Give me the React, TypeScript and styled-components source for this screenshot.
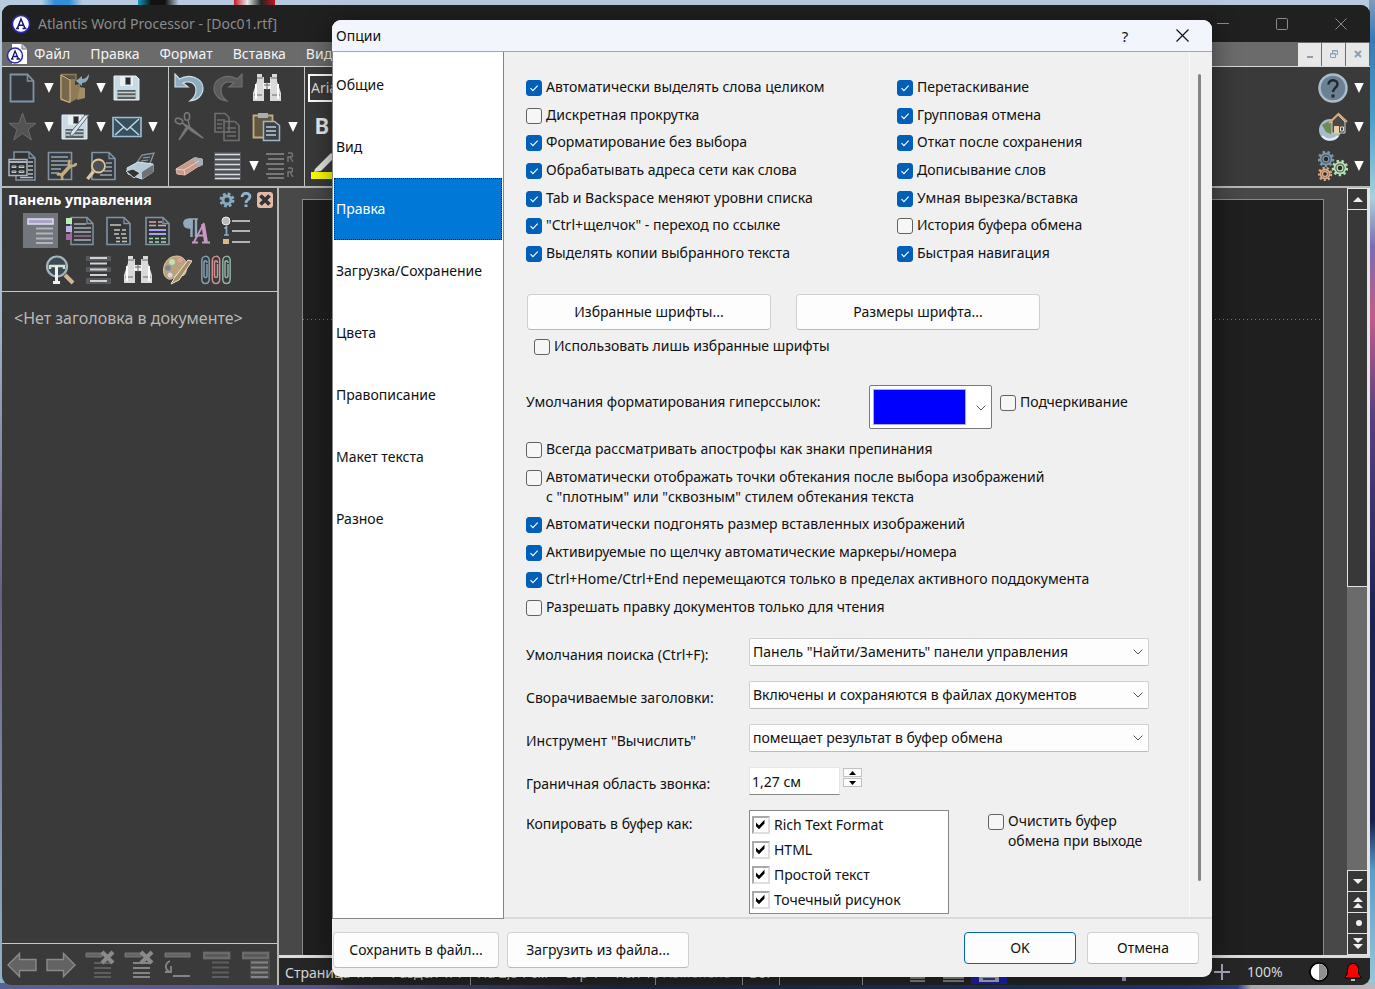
import React, { useState } from "react";
import styled, { createGlobalStyle, css } from "styled-components";

const uiFont = `"Noto Sans", "Open Sans", "Liberation Sans", sans-serif`;

const GlobalStyle = createGlobalStyle`
  *, *::before, *::after { box-sizing: border-box; }
  body { margin: 0; font: 14px/20px ${uiFont}; color: #111; }
  button, input, select { font: inherit; color: inherit; margin: 0; padding: 0; }
  button { cursor: default; background: none; border: 0; }
  h1, h2, ul { margin: 0; padding: 0; font-size: inherit; font-weight: inherit; list-style: none; }
  svg { display: block; flex: none; }
`;

/* ---------- desktop and main window ---------- */

const Desktop = styled.div`
  position: relative;
  height: 100vh;
  min-height: 980px;
  padding: 5px 5px 4px 2px;
  display: flex;
  background:
    linear-gradient(90deg, transparent 3%, #2f8fd8 4%, #2f8fd8 5%, transparent 6%, transparent 10%, #18a0c8 10%, #111 11%, #111 12%, transparent 13%, transparent 17%, #c01820 17%, #e8e8e8 18%, #222 19%, #c01820 20%, transparent 20%) 0 0 / 100% 5px no-repeat,
    linear-gradient(90deg, #56628f, #5a5486 25%, #1c2846 45%, #20386a 80%, #27407a 90%, #a9a7ad 91%, #b9b8bb) 0 100% / 100% 6px no-repeat,
    linear-gradient(#7f9cbd, #3b78b5 4%, #4aa0c8 12%, #a9d0dd 20%, #7d6cae 25%, #c05c8d 32%, #59407e 42%, #1b2450 62%, #16224c 83%, #5c9cc4 88%, #9ec7dc) 100% 0 / 6px 100% no-repeat,
    linear-gradient(#b7cbe0, #a6bcd2 30%, #6a5f86 60%, #8fb4cc);
`;

const MainWindow = styled.div`
  flex: 1;
  min-width: 0;
  display: flex;
  flex-direction: column;
  overflow: hidden;
  border-radius: 9px;
  background: #3a3a3a;
  color: #fff;
`;

const TitleBar = styled.header`
  height: 37px;
  flex: none;
  display: flex;
  align-items: center;
  padding-left: 9px;
  background: #202020;
  color: #8b8b8b;
  h1 { flex: 1; padding-left: 7px; font-size: 14px; }
`;

const CaptionButton = styled.button`
  width: 59px;
  height: 37px;
  display: grid;
  place-items: center;
`;

const MenuBar = styled.nav`
  height: 25px;
  flex: none;
  display: flex;
  align-items: center;
  padding-left: 4px;
  background: #6b6b6b;
  border-bottom: 1px solid #d8dcda;
`;

const MenuItem = styled.button`
  padding: 0 10px;
  color: #f4f4f4;
  &:first-of-type { padding-left: 6px; }
`;

const MdiButtons = styled.div`
  margin-left: auto;
  display: flex;
  gap: 1px;
  padding-right: 1px;
`;

const MdiButton = styled.button`
  width: 23px;
  height: 23px;
  display: grid;
  place-items: center;
  background: #e8e8e8;
`;

const Toolbar = styled.div`
  height: 121px;
  flex: none;
  display: flex;
  border-bottom: 2px solid #b4b9b6;
`;

const ToolGroup = styled.div<{ $left?: number; $right?: number; $end?: boolean }>`
  padding: 1px ${(p) => p.$right ?? 0}px 0 ${(p) => p.$left ?? 5}px;
  ${(p) => (p.$end ? "margin-left: auto;" : "border-right: 1px solid #c4c8c6;")}
`;

const ToolRow = styled.div`
  height: 39px;
  display: flex;
  align-items: center;
`;

const ToolButton = styled.button<{ $wide?: boolean }>`
  width: ${(p) => (p.$wide ? 39 : 30)}px;
  height: 36px;
  display: grid;
  place-items: center start;
`;

const ArrowButton = styled.button`
  width: 22px;
  height: 36px;
  display: grid;
  place-items: center;
`;

const FontSelect = styled.select`
  appearance: none;
  width: 180px;
  height: 28px;
  margin-left: 1px;
  padding-left: 1px;
  border: 2px solid #fff;
  background: transparent;
  color: #ddd;
`;

const BoldLabel = styled.button`
  padding-left: 8px;
  font: 700 22px/30px "Roboto", sans-serif;
  color: #eee;
`;

const Body = styled.div`
  flex: 1;
  min-height: 0;
  display: flex;
`;

const ControlPanel = styled.aside`
  width: 277px;
  flex: none;
  display: flex;
  flex-direction: column;
  border-right: 2px solid #b4b9b6;
`;

const PanelHead = styled.div`
  display: flex;
  align-items: center;
  height: 23px;
  padding: 0 3px 0 6px;
  h2 { flex: 1; font-weight: 700; font-size: 14px; }
`;

const PanelHeadButton = styled.button`
  width: 19px;
  display: grid;
  place-items: center;
`;

const PanelIcons = styled.div<{ $inset?: boolean }>`
  display: flex;
  height: 39px;
  padding-left: ${(p) => (p.$inset ? 38 : 19)}px;
`;

const PanelButton = styled.button<{ $active?: boolean }>`
  width: 35px;
  height: 35px;
  margin: 2px;
  display: grid;
  place-items: center;
  background: ${(p) => (p.$active ? "#71777c" : "transparent")};
`;

const PanelContent = styled.div`
  flex: 1;
  margin-top: 2px;
  padding: 16px 12px;
  border-top: 1px solid #c4c8c6;
  color: #b9b9b9;
  font-size: 16px;
`;

const PanelFoot = styled.div`
  height: 42px;
  flex: none;
  display: flex;
  align-items: center;
  border-top: 1px solid #c4c8c6;
`;

const FootButton = styled.button`
  width: 39px;
  display: grid;
  place-items: center;
`;

const Workspace = styled.div`
  flex: 1;
  min-width: 0;
  display: flex;
  flex-direction: column;
`;

const DocArea = styled.div`
  flex: 1;
  min-height: 0;
  display: flex;
  background: #484848;
  border-bottom: 3px solid #dcdcdc;
`;

const Page = styled.div`
  flex: 1;
  margin: 11px 23px 0;
  padding-top: 119px;
  background: #1f1f1f;
  border: 1px solid #8a8a8a;
  border-bottom: 0;
`;

const MarginLine = styled.div`
  height: 1px;
  background: repeating-linear-gradient(90deg, #777 0 1px, transparent 1px 4px);
`;

const DocScroll = styled.div`
  width: 23px;
  display: flex;
  flex-direction: column;
  gap: 1px;
  padding: 1px 3px 1px 1px;
  background: #e4e4e4;
`;

const ScrollThumb = styled.div`
  flex: 378;
  background: #383838;
`;

const ScrollTrack = styled.div`
  flex: 284;
  margin-left: -1px;
  background: #6b6b6b;
`;

const ScrollButton = styled.button`
  height: 20px;
  flex: none;
  display: grid;
  place-items: center;
  background: #383838;
`;

const StatusBar = styled.footer`
  height: 27px;
  flex: none;
  display: flex;
  align-items: center;
  background: #262626;
  color: #d8d8d8;
`;

const StatusCell = styled.span<{ $width: number; $red?: boolean }>`
  width: ${(p) => p.$width}px;
  height: 27px;
  flex: none;
  padding: 5px 6px 0;
  display: flex;
  gap: 16px;
  white-space: nowrap;
  border-right: 1px solid #9a9a9a;
  color: ${(p) => (p.$red ? "#c96a6a" : "#d8d8d8")};
`;

const ViewButtons = styled.div`
  display: flex;
  padding-left: 36px;
`;

const ViewButton = styled.button<{ $active?: boolean }>`
  width: 36px;
  height: 25px;
  display: grid;
  place-items: center;
  background: ${(p) => (p.$active ? "#2020b8" : "transparent")};
`;

const StatusEnd = styled.div`
  margin-left: auto;
  display: flex;
  align-items: center;
  > svg:first-child { margin-right: 79px; }
  > span { width: 63px; padding-left: 8px; }
`;

const StatusButton = styled.button`
  width: 34px;
  display: grid;
  place-items: center;
`;

/* ---------- options dialog ---------- */

const Dialog = styled.section`
  position: absolute;
  left: 332px;
  top: 20px;
  width: 880px;
  display: flex;
  flex-direction: column;
  overflow: hidden;
  border-radius: 9px;
  background: #f0f0f0;
  box-shadow: 0 4px 28px rgba(0, 0, 0, 0.45);
`;

const DialogTitle = styled.header`
  height: 32px;
  display: flex;
  align-items: center;
  padding-left: 4px;
  background: #f2f5fb;
  border-bottom: 1px solid #a6a6a6;
  h2 { flex: 1; }
`;

const DialogTitleButton = styled.button<{ $wide?: boolean }>`
  width: ${(p) => (p.$wide ? 60 : 54)}px;
  height: 31px;
  display: grid;
  place-items: center;
  font-size: 15px;
`;

const DialogBody = styled.div`
  display: flex;
`;

const Tabs = styled.nav`
  width: 172px;
  flex: none;
  padding: 2px 1px;
  background: #fff;
  border: 1px solid #82878c;
  border-top: 0;
`;

const Tab = styled.button<{ $active?: boolean }>`
  display: block;
  width: 100%;
  height: 62px;
  padding-left: 2px;
  text-align: left;
  ${(p) =>
    p.$active &&
    css`
      background: #0078d7;
      color: #fff;
      outline: 1px dotted #222;
      outline-offset: -1px;
    `}
`;

const OptionsPane = styled.div`
  flex: 1;
  min-width: 0;
  display: flex;
  border-bottom: 2px solid #dadada;
`;

const Options = styled.form`
  flex: 1;
  padding: 21px 0 3px 22px;
  border-right: 1px solid #fafafa;
`;

const PaneScroll = styled.div`
  width: 22px;
  padding: 22px 0 36px 8px;
`;

const PaneThumb = styled.div`
  width: 3px;
  height: 100%;
  border-radius: 2px;
  background: #858585;
`;

const CheckGrid = styled.div`
  display: grid;
  grid-template-columns: 371px 1fr;
  grid-template-rows: repeat(7, 1fr);
  grid-auto-flow: column;
  align-items: center;
  height: 194px;
`;

const CheckList = styled.div`
  display: grid;
  align-content: space-between;
  height: 178px;
  margin-top: 10px;
`;

const CheckLabel = styled.label`
  display: flex;
  align-items: flex-start;
  gap: 4px;
`;

const CheckBox = styled.input`
  appearance: none;
  width: 16px;
  height: 16px;
  flex: none;
  margin-top: 3px;
  border: 1px solid #626262;
  border-radius: 3px;
  background: #f6f6f6;
  &:checked {
    border-color: #005fb8;
    background: #005fb8
      url("data:image/svg+xml,%3Csvg xmlns='http://www.w3.org/2000/svg' viewBox='0 0 14 14'%3E%3Cpath d='M3.5 7.2l2.4 2.4 4.8-4.9' fill='none' stroke='white' stroke-width='1.1'/%3E%3C/svg%3E")
      center / 14px 14px no-repeat;
  }
`;

const ClassicCheckBox = styled(CheckBox)`
  width: 18px;
  height: 18px;
  margin-top: 0;
  border: 2px solid;
  border-color: #a9a9a9 #dedede #dedede #a9a9a9;
  border-radius: 0;
  background: #fff;
  &:checked {
    border-color: #a9a9a9 #dedede #dedede #a9a9a9;
    background: #fff
      url("data:image/svg+xml,%3Csvg xmlns='http://www.w3.org/2000/svg' viewBox='0 0 14 14'%3E%3Cpath d='M2 4.5v3.8l3 3 5.5-5.8V1.8L5 7.4z' fill='black'/%3E%3C/svg%3E")
      center / 14px 14px no-repeat;
  }
`;

const ButtonPair = styled.div`
  display: flex;
  gap: 25px;
  margin: 27px 0 6px 1px;
`;

const PushButton = styled.button<{ $width: number; $default?: boolean; $short?: boolean }>`
  width: ${(p) => p.$width}px;
  height: ${(p) => (p.$short ? 32 : 36)}px;
  border: 1px solid ${(p) => (p.$default ? "#0067b0" : "#d0d0d0")};
  border-bottom-color: ${(p) => (p.$default ? "#0067b0" : "#bababa")};
  border-radius: 4px;
  background: #fdfdfd;
`;

const Indented = styled.div`
  padding-left: 8px;
`;

const LinkRow = styled.div`
  display: flex;
  gap: 8px;
  margin-top: 29px;
  > label:first-child { width: 335px; padding-top: 7px; }
  > label:last-child { padding-top: 7px; }
`;

const chevron = `url("data:image/svg+xml,%3Csvg xmlns='http://www.w3.org/2000/svg' viewBox='0 0 10 6'%3E%3Cpath d='M.6.6L5 5 9.4.6' fill='none' stroke='%23555'/%3E%3C/svg%3E")`;

const ColorSelect = styled.select`
  appearance: none;
  width: 123px;
  height: 44px;
  border: 1px solid #7a7a7a;
  border-radius: 2px;
  background:
    linear-gradient(#0000ff, #0000ff) 4px 4px / 91px 34px no-repeat,
    linear-gradient(#a9a9ee, #a9a9ee) 3px 3px / 93px 36px no-repeat,
    ${chevron} 106px 19px / 10px 6px no-repeat,
    #fff;
`;

const Fields = styled.div`
  display: grid;
  grid-template-columns: 223px 400px;
  row-gap: 15px;
  margin-top: 21px;
  > label { padding-top: 7px; }
`;

const Select = styled.select`
  appearance: none;
  width: 400px;
  height: 28px;
  padding: 0 24px 0 3px;
  border: 1px solid #d0d0d0;
  border-bottom-color: #bababa;
  border-radius: 2px;
  background: #fdfdfd ${chevron} 383px 10px / 10px 6px no-repeat;
`;

const Spinner = styled.div`
  display: flex;
  gap: 3px;
`;

const NumberBox = styled.input`
  width: 91px;
  height: 28px;
  padding: 0 2px;
  border: 1px solid #e6e6e6;
  border-bottom-color: #868686;
  background: #fff;
`;

const SpinButtons = styled.div`
  display: grid;
  gap: 1px;
  align-content: start;
  padding-top: 1px;
`;

const SpinButton = styled.button`
  width: 19px;
  height: 9px;
  display: grid;
  place-items: center;
  border: 1px solid #c2c2c2;
  background: #fdfdfd;
`;

const ClipboardRow = styled.div`
  display: flex;
  margin-top: 15px;
  > span { width: 223px; padding-top: 4px; }
  > label { padding-top: 1px; }
`;

const FormatList = styled.div`
  width: 200px;
  height: 104px;
  margin-right: 39px;
  padding: 1px 2px 0;
  border: 1px solid #82878c;
  background: #fff;
  label { height: 25px; align-items: center; }
`;

const DialogFoot = styled.footer`
  display: flex;
  gap: 8px;
  padding: 13px 13px 9px 1px;
`;

const FootEnd = styled.div`
  margin-left: auto;
  display: flex;
  gap: 11px;
`;

/* ---------- icons ---------- */

const Svg = ({ children, size = 30 }: { children: React.ReactNode; size?: number }) => (
  <svg width={size} height={size} viewBox="0 0 30 30" fill="none" aria-hidden="true">
    {children}
  </svg>
);

const Logo = ({ size = 20 }: { size?: number }) => (
  <svg width={size} height={size} viewBox="0 0 20 20" aria-hidden="true">
    <circle cx="10" cy="10" r="8.6" fill="#fff" stroke="#2a2ab0" strokeWidth="1.6" />
    <path d="M5 14.5h3M11.500 14.500h4M6.300 14.500L10 5l4 9.500M7.800 11.300h5" stroke="#15157a" strokeWidth="1.500" fill="none" />
  </svg>
);

const DocLogo = () => (
  <svg width="22" height="22" viewBox="0 0 22 22" aria-hidden="true">
    <path d="M6 1h10l5 5v15H6z" fill="#fff" />
    <path d="M16 1v5h5" fill="#ccc" stroke="#777" />
    <circle cx="9" cy="12.500" r="7.500" fill="#fff" stroke="#2a2ab0" strokeWidth="1.500" />
    <path d="M5 16h2.500M10.500 16H14M6 16l3-8 3.500 8M7.500 13.500h4" stroke="#15157a" strokeWidth="1.300" fill="none" />
  </svg>
);

const Down = () => (
  <svg width="10" height="10" viewBox="0 0 10 10" aria-hidden="true">
    <path d="M.3 0h9.400L5 10z" fill="#fff" />
  </svg>
);

const sheet = "M3 1.500h17l6 6V28.500H3z";

const NewDoc = () => (
  <Svg>
    <path d="M2.500 1.500h17l6 6.500V28.500h-23z" fill="#33373b" stroke="#7f93a5" strokeWidth="1.800" />
    <path d="M19.500 1.500V8h6" stroke="#7f93a5" strokeWidth="1.500" />
  </Svg>
);
const Open = () => (
  <Svg>
    <path d="M1 1.500h15V8M1 1.500v25l9 3" stroke="#8d7b5c" strokeWidth="1.500" fill="#5e5340" />
    <path d="M9 6h6v6l5-1v13l-5 3-5 2.500z" fill="#8f7a57" />
    <path d="M1 2l9 5v22.500L1 26z" fill="#77684c" stroke="#d8b98a" />
    <path d="M29 1c0 6-3 9-7 9v3l-6-5 6-5v3c3 0 5-2 7-5z" fill="#8ea9bd" />
    <path d="M20 14l5 1v10l-8 2" fill="#a48d66" />
  </Svg>
);
const floppy = (
  <>
    <path d="M2 3h22l3 3v21H2z" fill="#c9dae5" stroke="#e6f0f6" />
    <path d="M8 3h13v10H8z" fill="#e9f0f4" />
    <path d="M13.500 4.500h5v7h-5z" fill="#2c2c2c" stroke="#889" />
    <path d="M5.500 17h18v9h-18z" fill="#555e60" />
    <path d="M5.500 19.500h18M5.500 23h18" stroke="#c5d0cf" strokeWidth="1.300" />
  </>
);
const Save = () => <Svg>{floppy}</Svg>;
const SaveAs = () => (
  <Svg>
    {floppy}
    <path d="M29 3L14 22l-4 3 1-5L25 3z" fill="#dfe6ea" stroke="#5b7080" />
  </Svg>
);
const Star = () => (
  <Svg>
    <path d="M14.500 1l3.600 10.300H28l-8 6.200 3.500 10.500-9-6.500-8.800 6.500L9 17.500 1 11.300h10z" fill="#535353" stroke="#6b6b6b" />
  </Svg>
);
const Mail = () => (
  <Svg>
    <path d="M1 5.500h28v19H1z" fill="#37505e" stroke="#9fc0d4" strokeWidth="1.600" />
    <path d="M3 7l12 11L27 7M3 23l9-8M27 23l-9-8" stroke="#bcd6e4" strokeWidth="1.500" />
  </Svg>
);
const FormDoc = () => (
  <Svg>
    <path d="M6 8V1h15l6 6v22H8v-4" fill="#333" stroke="#7f93a5" strokeWidth="1.500" />
    <path d="M21 1v6h6" stroke="#7f93a5" strokeWidth="1.300" />
    <path d="M20 11h5M20 15h5M20 19h5M20 23h5M12 26.500h13" stroke="#b4bdc4" strokeWidth="1.400" />
    <path d="M1 8.500h18v16H1z" fill="#303030" stroke="#a6b5c1" strokeWidth="1.500" />
    <path d="M1 11h18" stroke="#a6b5c1" strokeWidth="2" />
    <path d="M4 15h4v1.500H4zM4 20h4v1.500H4zM11 15h5v1.500h-5zM11 20h5v1.500h-5z" stroke="#c3c9cd" />
  </Svg>
);
const DocTool = () => (
  <Svg>
    <path d="M1.500 1.500h23v27h-23z" fill="#363a3d" stroke="#7f93a5" strokeWidth="1.600" />
    <path d="M4 6h17M4 10h17M4 14h17M4 18h10M4 22h8" stroke="#9ba5ad" strokeWidth="1.300" />
    <path d="M14 25L24 14" stroke="#c5ab7f" strokeWidth="3.500" />
    <path d="M23 9c-2 3-1 6 2 6 2 0 4-1 4-3M10 24c3-2 6 0 5 5" stroke="#c5ab7f" strokeWidth="2.600" />
  </Svg>
);
const Preview = () => (
  <Svg>
    <path d="M6 1.500h17l6 6V28.500H6z" fill="#363a3d" stroke="#7f93a5" strokeWidth="1.700" />
    <path d="M23 1.500v6h6" stroke="#7f93a5" strokeWidth="1.300" />
    <path d="M20 12h6M20 16h6M18 20h8M14 24h12" stroke="#9ba5ad" strokeWidth="1.300" />
    <circle cx="12.500" cy="15" r="6.500" fill="#4c5053" stroke="#e0c49d" strokeWidth="1.800" />
    <path d="M7.500 20.500L1.500 28" stroke="#e0c49d" strokeWidth="3.500" />
  </Svg>
);
const Print = () => (
  <Svg>
    <path d="M11 13L17 4l12-2-5 13" fill="#3d4246" stroke="#8796a0" strokeWidth="1.300" />
    <path d="M2 17L13 11l15 2v8L17 28 3 23z" fill="#b6c9d6" stroke="#d9e6ee" />
    <path d="M17 21l11-7v8l-11 6z" fill="#6d7376" />
    <path d="M1 20l7-2 7 4-6 5z" fill="#333" stroke="#cfd8dd" />
    <path d="M18 7l7-1M16 10l7-1" stroke="#98a4ac" />
  </Svg>
);
const Undo = ({ off }: { off?: boolean }) => (
  <Svg>
    <g transform={off ? "matrix(-1 0 0 1 30 0)" : undefined}>
      <path
        d="M1 1v13h13l-5-4c6-3 13 0 13 7 0 4-2 8-6 11 8-1 13-6 13-13C29 5 15 0 5.500 6z"
        fill={off ? "#5b5b5b" : "#8eabc0"}
        stroke={off ? "#6f6f6f" : "#cfe0ec"}
        strokeWidth="1.200"
      />
    </g>
  </Svg>
);
const Binoculars = () => (
  <Svg>
    <path d="M5 1h5v3h2v24H1V20L5 8zM20 1h5v7l4 12v8H18V4h2z" fill="#dadada" />
    <path d="M11 10h8v6h-8z" fill="#efefef" />
    <path d="M12 12h6M15 9v8M5 5h6M19 5h6M2 22h8M20 22h8" stroke="#666" />
    <path d="M4 11v15M26 11v15" stroke="#fff" strokeWidth="2" />
  </Svg>
);
const Cut = () => (
  <Svg>
    <path d="M14 8l2 9 1 2M8 11l9 5 12 10-10-6-5-4L5 28l7-12" fill="#777" stroke="#777" strokeWidth="1.500" />
    <ellipse cx="5" cy="9" rx="3.800" ry="2.600" transform="rotate(20 5 9)" stroke="#777" strokeWidth="1.600" />
    <ellipse cx="13" cy="4.500" rx="2.600" ry="3.800" stroke="#777" strokeWidth="1.600" />
  </Svg>
);
const Copy = () => (
  <Svg>
    <path d="M2 1.500h10l4 4V20H2zM11 9.500h11l4 4V28.500H11z" fill="#3a3a3a" stroke="#6f6f6f" strokeWidth="1.600" />
    <path d="M4 8h8M4 12h5M4 16h5M14 16h9M14 20h9M14 24h9" stroke="#6f6f6f" strokeWidth="1.300" />
  </Svg>
);
const Paste = () => (
  <Svg>
    <path d="M1.500 3.500h19v22h-19z" fill="#625840" stroke="#c2ab82" strokeWidth="1.800" />
    <path d="M6 1h10v5H6z" fill="#a9adb0" />
    <path d="M11.500 9.500h11l5 4V28.500h-16z" fill="#3b4247" stroke="#a0b6c5" strokeWidth="1.500" />
    <path d="M14 15h10M14 19h10M14 23h10" stroke="#c0cbd3" strokeWidth="1.300" />
  </Svg>
);
const Eraser = () => (
  <Svg>
    <path d="M2 18L20 7l8 1v5L11 24l-8-1z" fill="#c7988c" stroke="#e0b9ad" />
    <path d="M18 8l3-2 8 2v6l-4 2z" fill="#a5aeb5" />
    <path d="M2 18l8 1 15-9M10 19l1 5" stroke="#edcdc4" />
  </Svg>
);
const Lines = () => (
  <Svg>
    <path d="M1 1h27v28H1z" fill="#50545a" />
    <path d="M2 3.500h25M2 8.500h25M2 13.500h25M2 18.500h25M2 23.500h25M2 27.500h25" stroke="#dcdfe2" strokeWidth="1.700" />
  </Svg>
);
const Wrap = () => (
  <Svg>
    <path d="M1 3h18M3 8h16M1 13h18M3 18h16M1 23h18M3 27h16" stroke="#777" strokeWidth="1.800" />
    <path d="M23 2h3c2 0 2 4 0 4h-3v5M25 6l3 5M23 17h3c2 0 2 4 0 4h-3v5M25 21l3 5" stroke="#777" strokeWidth="1.400" />
  </Svg>
);
const Marker = () => (
  <Svg>
    <path d="M4 21h26v7H4z" fill="#ff0" />
    <path d="M8 18L24 2l5 3-15 15-7 1z" fill="#e6e6e6" />
  </Svg>
);
const Help = () => (
  <Svg>
    <circle cx="15" cy="15" r="13.500" fill="#6b8193" stroke="#a9bccb" strokeWidth="2.500" />
    <path d="M10.500 11.500c0-6 9.500-5.500 9 0-.6 3.500-4.500 3.500-4.500 7.500" stroke="#20272d" strokeWidth="2.400" />
    <path d="M13.500 21.500h3v3h-3z" fill="#20272d" />
  </Svg>
);
const Home = () => (
  <Svg>
    <circle cx="12" cy="18" r="11" fill="#a5bccb" />
    <path d="M4 13l7-4 5 5-3 8-5-2z" fill="#6d8a58" />
    <path d="M4 24c5 5 12 4 16 0" stroke="#e5eef4" strokeWidth="2" />
    <path d="M14 9l6-6 7 7v11H14z" fill="#4a4744" stroke="#cfc8bf" />
    <path d="M11 11L20.500 2 29 10" stroke="#d0a982" strokeWidth="2.200" />
    <path d="M16 14h5v7h-5z" fill="#e8cfa6" />
    <path d="M22.500 15h3v4h-3z" stroke="#ddd" />
  </Svg>
);
const Cog = ({ x, y, r, c }: { x: number; y: number; r: number; c: string }) => {
  const tooth = (r * 6.283) / 18;
  return (
    <>
      <circle cx={x} cy={y} r={r} stroke={c} strokeWidth="2.600" strokeDasharray={`${tooth} ${tooth}`} />
      <circle cx={x} cy={y} r={r - 1.500} fill="#44484b" stroke={c} strokeWidth="1.800" />
      <circle cx={x} cy={y} r={r / 2.400} fill="#2a2a2a" stroke={c} strokeWidth="1.400" />
    </>
  );
};
const Cogs = () => (
  <Svg>
    <Cog x={8} y={8} r={7} c="#7d98ac" />
    <Cog x={22} y={17} r={7} c="#b3e0b3" />
    <Cog x={7} y={23} r={6} c="#d9a883" />
  </Svg>
);

/* control panel icons */
const Headings = ({ off, bold }: { off?: boolean; bold?: boolean }) => (
  <Svg>
    {off && <path d={bold ? "M1 1h28v28H9V10H1z" : "M1 1h28v9H1z"} fill="#4c4c4c" />}
    <path d="M2 3h25v5H2z" fill={off ? "#5a5a5a" : "#a9a3c7"} stroke={off ? "#757575" : "#e1ddf3"} strokeWidth="1.500" />
    <path d="M10 12.500h17M10 17.500h17M10 22.500h17M10 27h17" stroke={off ? (bold ? "#858585" : "#5e5e5e") : "#b3b4ba"} strokeWidth="1.800" />
  </Svg>
);
const ColorTabs = () => (
  <Svg>
    <path d="M6 1.500h16l6 6V28.500H6z" fill="#3a3a3a" stroke="#7f93a5" strokeWidth="1.500" />
    <path d="M22 1.500v6h6" stroke="#7f93a5" strokeWidth="1.300" />
    <path d="M9 8h12M9 12h17M9 16h17M9 24h17" stroke="#a9b2b9" strokeWidth="1.400" />
    <path d="M9 20h17" stroke="#a56aa5" strokeWidth="1.600" />
    <path d="M1 2h6v6H1z" fill="#b9f0b5" />
    <path d="M1 10h6v6H1z" fill="#b9b3ee" />
    <path d="M1 18h6v6H1z" fill="#a56aa5" />
  </Svg>
);
const Outline = () => (
  <Svg>
    <path d={sheet} fill="#34383b" stroke="#7f93a5" strokeWidth="1.600" />
    <path d="M20 1.500v6h6" stroke="#7f93a5" strokeWidth="1.300" />
    <path d="M6 9h11M10 14h6M18 14h4M10 18h5M17 18h5M12 22h4M18 22h5M12 25.500h4M18 25.500h5" stroke="#c9c5b8" strokeWidth="1.600" />
  </Svg>
);
const Sections = () => (
  <Svg>
    <path d={sheet} fill="#34383b" stroke="#7f93a5" strokeWidth="1.600" />
    <path d="M20 1.500v6h6" stroke="#7f93a5" strokeWidth="1.300" />
    <path d="M6 6h7M15 6h4M6 9.500h7M15 9.500h8" stroke="#e0a6a6" strokeWidth="1.600" />
    <path d="M6 14h17M6 18h17" stroke="#a9a3ee" strokeWidth="1.800" />
    <path d="M6 22.500h4M12 22.500h4M18 22.500h5M6 26h4M12 26h4M18 26h5" stroke="#a5dca5" strokeWidth="1.500" />
  </Svg>
);
const Styles = () => (
  <Svg>
    <path d="M14 3v18M9.500 3v18" stroke="#93aabd" strokeWidth="2.400" />
    <path d="M16 3H7C0 3 0 12 8 12h2V3" fill="#93aabd" stroke="#93aabd" strokeWidth="1.500" />
    <path d="M12 26L22 7" stroke="#c79ac4" strokeWidth="1.800" />
    <path d="M21 8l3 18" stroke="#c79ac4" strokeWidth="3.800" />
    <path d="M15 19.500h8M10 26.500h6M20 26.500h8" stroke="#c79ac4" strokeWidth="2" />
  </Svg>
);
const Bullets = () => (
  <Svg>
    <circle cx="5" cy="5" r="4" fill="#b9b9b9" stroke="#eee" />
    <path d="M3.500 12.500L5.500 11v8M3 19h5" stroke="#8fabbf" strokeWidth="1.700" />
    <path d="M2 23h6v5H2z" fill="#d8b98a" />
    <path d="M11 5h18M11 15h18M11 26h18" stroke="#ddd" strokeWidth="1.700" />
  </Svg>
);
const Zoom = () => (
  <Svg>
    <circle cx="12" cy="11.500" r="10" fill="#3e4a50" stroke="#a3b3bf" strokeWidth="2.200" />
    <path d="M5 11h14v3M5 10v4" stroke="#cfe5d5" strokeWidth="2.400" />
    <path d="M11.500 11v16M8 27.500h7" stroke="#eef3ef" strokeWidth="3" />
    <path d="M20 20l8 8" stroke="#d3b598" strokeWidth="4" />
  </Svg>
);
const Spacing = () => (
  <Svg>
    <path d="M2 1h25v5H2zM2 12h25v5H2zM2 23h25v6H2z" fill="#56585b" />
    <path d="M6 3h17M6 8.500h17M6 14.500h17M6 20h17M6 26h17" stroke="#d0d3d5" strokeWidth="1.900" />
  </Svg>
);
const Palette = () => (
  <Svg>
    <path d="M15 1C4 1 0 12 2 19c2 6 8 7 11 2 2-3 8 2 10-2 5-9 0-18-8-18z" fill="#b9a27d" stroke="#dcc7a2" />
    <circle cx="10" cy="7" r="3" fill="#bfe3b0" />
    <circle cx="18" cy="5" r="2.600" fill="#e0a0a0" />
    <circle cx="6" cy="13" r="2.700" fill="#7288a0" />
    <circle cx="8" cy="20" r="2.500" fill="#d8d8d8" />
    <path d="M30 6L17 25l-8 4 4-7L26 5z" fill="#a8906b" stroke="#efe6d5" />
  </Svg>
);
const Clips = () => (
  <Svg>
    {["#7f9fb5", "#cf8f94", "#8fb0a8"].map((c, i) => (
      <path key={c} transform={`translate(${i * 10.500} 0)`} d="M6 9v12a1.500 1.500 0 0 1-3 0V6M3 21V8c0-3 3-3 3 0M.8 6v18c0 6 7.400 6 7.400 0V5c0-5-7.400-5-7.400 1" stroke={c} strokeWidth="1.500" />
    ))}
  </Svg>
);
const Back = ({ flip }: { flip?: boolean }) => (
  <Svg>
    <path transform={flip ? "matrix(-1 0 0 1 30 0)" : undefined} d="M1 15L12.500 3.500V9.500h16.500v11H12.500v6z" fill="#636363" stroke="#8a8a8a" strokeWidth="1.400" />
  </Svg>
);
const RemoveHeading = ({ bold }: { bold?: boolean }) => (
  <Svg>
    <path d="M1 3h16v4H1z" fill="#666" stroke="#777" />
    <path d="M9 13h17M9 18h17M9 23h17M9 27h17" stroke={bold ? "#858585" : "#5e5e5e"} strokeWidth="1.800" />
    <path d="M17 2l11 11M28 2L17 13" stroke="#8a8a8a" strokeWidth="4.200" />
  </Svg>
);
const MoveHeading = () => (
  <Svg>
    <path d="M2 3h25v4H2z" fill="#666" stroke="#777" />
    <path d="M10 26h17M7 11c-6 3-5 9 0 11M2 22h6v-6" stroke="#858585" strokeWidth="1.800" />
  </Svg>
);

const ScrollGlyph = ({ d }: { d: string }) => (
  <svg width="14" height="14" viewBox="0 0 14 14" fill="#f0f0f0" aria-hidden="true">
    <path d={d} />
  </svg>
);

/* ---------- data ---------- */

const tabs = ["Общие", "Вид", "Правка", "Загрузка/Сохранение", "Цвета", "Правописание", "Макет текста", "Разное"];

const mainChecks: [string, boolean][] = [
  ["Автоматически выделять слова целиком", true],
  ["Дискретная прокрутка", false],
  ["Форматирование без выбора", true],
  ["Обрабатывать адреса сети как слова", true],
  ["Tab и Backspace меняют уровни списка", true],
  ['"Ctrl+щелчок" - переход по ссылке', true],
  ["Выделять копии выбранного текста", true],
  ["Перетаскивание", true],
  ["Групповая отмена", true],
  ["Откат после сохранения", true],
  ["Дописывание слов", true],
  ["Умная вырезка/вставка", true],
  ["История буфера обмена", false],
  ["Быстрая навигация", true],
];

const moreChecks: [React.ReactNode, boolean][] = [
  ["Всегда рассматривать апострофы как знаки препинания", false],
  [
    <>
      Автоматически отображать точки обтекания после выбора изображений
      <br />с "плотным" или "сквозным" стилем обтекания текста
    </>,
    false,
  ],
  ["Автоматически подгонять размер вставленных изображений", true],
  ["Активируемые по щелчку автоматические маркеры/номера", true],
  ["Ctrl+Home/Ctrl+End перемещаются только в пределах активного поддокумента", true],
  ["Разрешать правку документов только для чтения", false],
];

const selects = [
  ["find", "Умолчания поиска (Ctrl+F):", 'Панель "Найти/Заменить" панели управления'],
  ["fold", "Сворачиваемые заголовки:", "Включены и сохраняются в файлах документов"],
  ["calc", 'Инструмент "Вычислить"', "помещает результат в буфер обмена"],
];

const formats = ["Rich Text Format", "HTML", "Простой текст", "Точечный рисунок"];

const Check = ({ children, on }: { children: React.ReactNode; on?: boolean }) => (
  <CheckLabel>
    <CheckBox type="checkbox" defaultChecked={on} />
    <span>{children}</span>
  </CheckLabel>
);

const Tool = ({ name, wide, children }: { name: string; wide?: boolean; children: React.ReactNode }) => (
  <ToolButton $wide={wide} aria-label={name}>{children}</ToolButton>
);

const Drop = ({ name }: { name: string }) => (
  <ArrowButton aria-label={name}>
    <Down />
  </ArrowButton>
);

/* ---------- sections ---------- */

const OptionsDialog = () => {
  const [active, setActive] = useState("Правка");
  return (
    <Dialog role="dialog" aria-labelledby="options-title">
      <DialogTitle>
        <h2 id="options-title">Опции</h2>
        <DialogTitleButton aria-label="Справка">?</DialogTitleButton>
        <DialogTitleButton $wide aria-label="Закрыть">
          <svg width="13" height="13" viewBox="0 0 13 13" stroke="#111" strokeWidth="1.200"><path d="M.5.5l12 12M12.500.5l-12 12" /></svg>
        </DialogTitleButton>
      </DialogTitle>
      <DialogBody>
        <Tabs>
          {tabs.map((t) => (
            <Tab key={t} $active={t === active} onClick={() => setActive(t)}>{t}</Tab>
          ))}
        </Tabs>
        <OptionsPane>
          <Options>
            <CheckGrid>
              {mainChecks.map(([text, on]) => <Check key={text} on={on}>{text}</Check>)}
            </CheckGrid>
            <ButtonPair>
              <PushButton type="button" $width={244}>Избранные шрифты...</PushButton>
              <PushButton type="button" $width={244}>Размеры шрифта...</PushButton>
            </ButtonPair>
            <Indented>
              <Check>Использовать лишь избранные шрифты</Check>
            </Indented>
            <LinkRow>
              <label htmlFor="link-color">Умолчания форматирования гиперссылок:</label>
              <ColorSelect id="link-color"><option aria-label="#0000ff" /></ColorSelect>
              <Check>Подчеркивание</Check>
            </LinkRow>
            <CheckList>
              {moreChecks.map(([text, on], i) => <Check key={i} on={on}>{text}</Check>)}
            </CheckList>
            <Fields>
              {selects.map(([id, label, value]) => (
                <React.Fragment key={id}>
                  <label htmlFor={id}>{label}</label>
                  <Select id={id}><option>{value}</option></Select>
                </React.Fragment>
              ))}
              <label htmlFor="bell">Граничная область звонка:</label>
              <Spinner>
                <NumberBox id="bell" defaultValue="1,27 см" />
                <SpinButtons>
                  <SpinButton type="button" aria-label="Больше"><svg width="7" height="4" viewBox="0 0 7 4"><path d="M0 4l3.500-4L7 4z" /></svg></SpinButton>
                  <SpinButton type="button" aria-label="Меньше"><svg width="7" height="4" viewBox="0 0 7 4"><path d="M0 0l3.500 4L7 0z" /></svg></SpinButton>
                </SpinButtons>
              </Spinner>
            </Fields>
            <ClipboardRow>
              <span id="formats">Копировать в буфер как:</span>
              <FormatList role="group" aria-labelledby="formats">
                {formats.map((f) => (
                  <CheckLabel key={f}>
                    <ClassicCheckBox type="checkbox" defaultChecked />
                    <span>{f}</span>
                  </CheckLabel>
                ))}
              </FormatList>
              <Check>Очистить буфер<br />обмена при выходе</Check>
            </ClipboardRow>
          </Options>
          <PaneScroll><PaneThumb /></PaneScroll>
        </OptionsPane>
      </DialogBody>
      <DialogFoot>
        <PushButton $width={166}>Сохранить в файл...</PushButton>
        <PushButton $width={182}>Загрузить из файла...</PushButton>
        <FootEnd>
          <PushButton $width={112} $short $default>OK</PushButton>
          <PushButton $width={112} $short>Отмена</PushButton>
        </FootEnd>
      </DialogFoot>
    </Dialog>
  );
};

const MainToolbar = () => (
  <Toolbar>
    <ToolGroup $left={6} $right={4}>
      <ToolRow>
        <Tool name="Новый"><NewDoc /></Tool><Drop name="Новый: меню" />
        <Tool name="Открыть"><Open /></Tool><Drop name="Открыть: меню" />
        <Tool name="Сохранить"><Save /></Tool>
      </ToolRow>
      <ToolRow>
        <Tool name="Избранное"><Star /></Tool><Drop name="Избранное: меню" />
        <Tool name="Сохранить как"><SaveAs /></Tool><Drop name="Сохранить как: меню" />
        <Tool name="Отправить"><Mail /></Tool><Drop name="Отправить: меню" />
      </ToolRow>
      <ToolRow>
        <Tool wide name="Свойства"><FormDoc /></Tool>
        <Tool wide name="Параметры страницы"><DocTool /></Tool>
        <Tool wide name="Просмотр"><Preview /></Tool>
        <Tool wide name="Печать"><Print /></Tool>
      </ToolRow>
    </ToolGroup>
    <ToolGroup>
      <ToolRow>
        <Tool wide name="Отменить"><Undo /></Tool>
        <Tool wide name="Повторить"><Undo off /></Tool>
        <Tool name="Найти"><Binoculars /></Tool>
      </ToolRow>
      <ToolRow>
        <Tool wide name="Вырезать"><Cut /></Tool>
        <Tool wide name="Копировать"><Copy /></Tool>
        <Tool name="Вставить"><Paste /></Tool><Drop name="Вставить: меню" />
      </ToolRow>
      <ToolRow>
        <Tool wide name="Очистить"><Eraser /></Tool>
        <Tool name="Выделить"><Lines /></Tool><Drop name="Выделить: меню" />
        <Tool name="Перенос"><Wrap /></Tool>
      </ToolRow>
    </ToolGroup>
    <ToolGroup $left={2} $right={5}>
      <ToolRow><FontSelect aria-label="Шрифт"><option>Arial</option></FontSelect></ToolRow>
      <ToolRow><BoldLabel>B</BoldLabel></ToolRow>
      <ToolRow><Tool name="Маркер"><Marker /></Tool></ToolRow>
    </ToolGroup>
    <ToolGroup $end>
      <ToolRow><Tool name="Справка"><Help /></Tool><Drop name="Справка: меню" /></ToolRow>
      <ToolRow><Tool name="Сайт"><Home /></Tool><Drop name="Сайт: меню" /></ToolRow>
      <ToolRow><Tool name="Настройки"><Cogs /></Tool><Drop name="Настройки: меню" /></ToolRow>
    </ToolGroup>
  </Toolbar>
);

const SidePanel = () => (
  <ControlPanel>
    <PanelHead>
      <h2>Панель управления</h2>
      <PanelHeadButton aria-label="Настроить">
        <svg width="16" height="16" viewBox="0 0 16 16" fill="none">
          <circle cx="8" cy="8" r="6" stroke="#86a9bf" strokeWidth="3" strokeDasharray="2.700 2" />
          <circle cx="8" cy="8" r="4" stroke="#86a9bf" strokeWidth="3" />
        </svg>
      </PanelHeadButton>
      <PanelHeadButton aria-label="Справка">
        <svg width="12" height="16" viewBox="0 0 12 16" fill="none">
          <path d="M2 5c0-5 8-4.500 8-.5 0 3-4 3-4 6.500" stroke="#8fb4cf" strokeWidth="2.800" />
          <path d="M4.500 12.500h3V15h-3z" fill="#8fb4cf" />
        </svg>
      </PanelHeadButton>
      <PanelHeadButton aria-label="Закрыть панель">
        <svg width="16" height="16" viewBox="0 0 16 16">
          <rect width="16" height="16" rx="3" fill="#e6b8a6" />
          <path d="M3.500 3.500l9 9M12.500 3.500l-9 9" stroke="#333" strokeWidth="3.800" />
        </svg>
      </PanelHeadButton>
    </PanelHead>
    <PanelIcons>
      {[Headings, ColorTabs, Outline, Sections, Styles, Bullets].map((I, i) => (
        <PanelButton key={i} $active={i === 0} aria-label={`Вкладка ${i + 1}`}><I /></PanelButton>
      ))}
    </PanelIcons>
    <PanelIcons $inset>
      {[Zoom, Spacing, Binoculars, Palette, Clips].map((I, i) => (
        <PanelButton key={i} aria-label={`Вкладка ${i + 7}`}><I /></PanelButton>
      ))}
    </PanelIcons>
    <PanelContent>&lt;Нет заголовка в документе&gt;</PanelContent>
    <PanelFoot>
      <FootButton aria-label="Назад"><Back /></FootButton>
      <FootButton aria-label="Вперед"><Back flip /></FootButton>
      <FootButton aria-label="Удалить"><RemoveHeading /></FootButton>
      <FootButton aria-label="Удалить с текстом"><RemoveHeading bold /></FootButton>
      <FootButton aria-label="Переместить"><MoveHeading /></FootButton>
      <FootButton aria-label="Выделить заголовок"><Headings off /></FootButton>
      <FootButton aria-label="Выделить раздел"><Headings off bold /></FootButton>
    </PanelFoot>
  </ControlPanel>
);

export default function App() {
  return (
    <Desktop>
      <GlobalStyle />
      <MainWindow>
        <TitleBar>
          <Logo />
          <h1>Atlantis Word Processor - [Doc01.rtf]</h1>
          <CaptionButton aria-label="Свернуть">
            <svg width="12" height="12" viewBox="0 0 12 12" stroke="#8b8b8b"><path d="M0 5.500h12" /></svg>
          </CaptionButton>
          <CaptionButton aria-label="Развернуть">
            <svg width="12" height="12" viewBox="0 0 12 12" stroke="#8b8b8b" fill="none"><rect x=".5" y=".5" width="11" height="11" rx="1" /></svg>
          </CaptionButton>
          <CaptionButton aria-label="Закрыть">
            <svg width="12" height="12" viewBox="0 0 12 12" stroke="#8b8b8b"><path d="M.5.5l11 11M11.500.5l-11 11" /></svg>
          </CaptionButton>
        </TitleBar>
        <MenuBar>
          <DocLogo />
          {["Файл", "Правка", "Формат", "Вставка", "Вид"].map((m) => <MenuItem key={m}>{m}</MenuItem>)}
          <MdiButtons>
            <MdiButton aria-label="Свернуть документ">
              <svg width="10" height="10" viewBox="0 0 10 10" stroke="#8c9fb5" strokeWidth="2"><path d="M2 8h6" /></svg>
            </MdiButton>
            <MdiButton aria-label="Восстановить документ">
              <svg width="10" height="10" viewBox="0 0 10 10" stroke="#8c9fb5" fill="none"><path d="M3.500 4V1.500h5v4H7M1.500 4.500h5v4h-5zM3.500 2h5M1.500 5h5" /></svg>
            </MdiButton>
            <MdiButton aria-label="Закрыть документ">
              <svg width="8" height="8" viewBox="0 0 8 8" stroke="#8c9fb5" strokeWidth="2"><path d="M1 1l6 6M7 1L1 7" /></svg>
            </MdiButton>
          </MdiButtons>
        </MenuBar>
        <MainToolbar />
        <Body>
          <SidePanel />
          <Workspace>
            <DocArea>
              <Page><MarginLine /></Page>
              <DocScroll>
                <ScrollButton aria-label="Вверх"><ScrollGlyph d="M2 10h10L7 5z" /></ScrollButton>
                <ScrollThumb />
                <ScrollTrack />
                <ScrollButton aria-label="Вниз"><ScrollGlyph d="M2 5h10L7 10z" /></ScrollButton>
                <ScrollButton aria-label="Предыдущая страница"><ScrollGlyph d="M2 7h10L7 2zM2 13h10L7 8z" /></ScrollButton>
                <ScrollButton aria-label="Выбор объекта"><ScrollGlyph d="M8 4a3 3 0 1 1 0 6 3 3 0 0 1 0-6z" /></ScrollButton>
                <ScrollButton aria-label="Следующая страница"><ScrollGlyph d="M2 1h10L7 6zM2 7h10L7 12z" /></ScrollButton>
              </DocScroll>
            </DocArea>
            <StatusBar>
              <StatusCell $width={192}><span>Страница 1/1</span><span>Раздел 1/1</span></StatusCell>
              <StatusCell $width={185}><span>На 2,54 см</span><span>Стр 1</span><span>Кол 15</span></StatusCell>
              <StatusCell $width={87} $red>Изменено</StatusCell>
              <StatusCell $width={37}>Вст</StatusCell>
              <StatusCell $width={83} />
              <ViewButtons>
                <ViewButton aria-label="Черновик"><svg width="15" height="22" viewBox="0 0 15 22" stroke="#aaa" strokeWidth="1.500"><path d="M0 5h15M0 9h15M0 13h15M0 17h15M0 20h15" /></svg></ViewButton>
                <ViewButton aria-label="Веб-документ"><svg width="21" height="22" viewBox="0 0 21 22" stroke="#aaa" strokeWidth="1.500"><path d="M0 5h21M0 9h21M0 13h21M0 17h21M0 20h21" /></svg></ViewButton>
                <ViewButton $active aria-label="Разметка страниц"><svg width="20" height="22" viewBox="0 0 20 22"><path d="M0 1h20v20H0z" fill="#b9b9cc" /><path d="M4 7h12M4 11h12M4 15h12M4 18h12" stroke="#111a80" strokeWidth="1.500" /></svg></ViewButton>
              </ViewButtons>
              <StatusEnd>
                <svg width="4" height="18" viewBox="0 0 4 18"><path d="M0 0h4v18H0z" fill="#a9a3c0" /></svg>
                <StatusButton aria-label="Увеличить"><svg width="16" height="16" viewBox="0 0 16 16" stroke="#a9a3c0" strokeWidth="2"><path d="M8 0v16M0 8h16" /></svg></StatusButton>
                <span>100%</span>
                <StatusButton aria-label="Контраст">
                  <svg width="20" height="20" viewBox="0 0 20 20"><circle cx="10" cy="10" r="9" fill="#fff" stroke="#000" strokeWidth="1.600" /><path d="M10 2a8 8 0 0 1 0 16z" fill="#8f8f8f" /></svg>
                </StatusButton>
                <StatusButton aria-label="Звонок">
                  <svg width="18" height="20" viewBox="0 0 18 20"><path d="M9 1.500c-7 0-5 8-6 11l-2 2.500v1h16v-1l-2-2.500c-1-3 1-11-6-11z" fill="#f00" stroke="#000" /><path d="M7 17h4v2H7z" fill="#bbb" /></svg>
                </StatusButton>
              </StatusEnd>
            </StatusBar>
          </Workspace>
        </Body>
      </MainWindow>
      <OptionsDialog />
    </Desktop>
  );
}
